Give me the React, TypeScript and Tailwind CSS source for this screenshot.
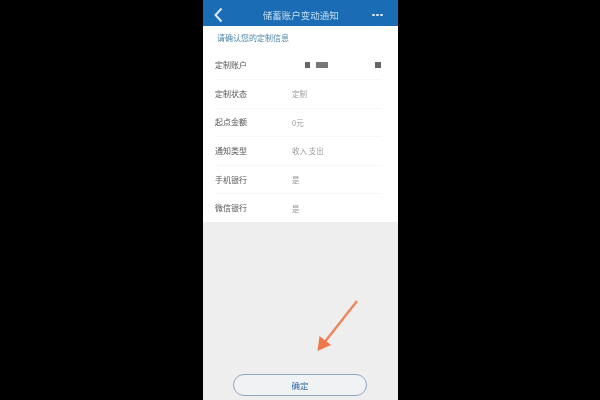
const font = { fontFamily: '"Noto Sans CJK SC", "Liberation Sans", sans-serif' };

const rows = [
  { label: "定制状态", value: "定制" },
  { label: "起点金额", value: "0元" },
  { label: "通知类型", value: "收入 支出" },
  { label: "手机银行", value: "是" },
  { label: "微信银行", value: "是" },
];

function Row({ label, value }: { label: string; value: string }) {
  return (
    <div className="flex h-[28.6px] items-center border-t border-[#f6f6f6]">
      <span className="w-[77px] text-[8px] text-[#555555]">{label}</span>
      <span className="text-[7.5px] text-[#999999]">{value}</span>
    </div>
  );
}

export default function App() {
  return (
    <div className="flex h-[400px] w-[600px] justify-center overflow-hidden bg-black" style={font}>
      <div className="relative ml-[1px] flex w-[195px] flex-col bg-[#eeeeee] blur-[0.6px]">
        {/* Header */}
        <div className="flex h-[26px] shrink-0 items-center justify-between bg-[#1a6db5] pl-[11px] pr-[15px] pt-[4px]">
          <svg width="9" height="16" viewBox="0 0 9 16" fill="none">
            <path d="M7.5 1.5 L1.5 8 L7.5 14.5" stroke="#dbe9f6" strokeWidth="2" />
          </svg>
          <span className="ml-[6px] text-[9.5px] text-[#c4dcf0]">储蓄账户变动通知</span>
          <span className="flex gap-[1.5px]">
            <i className="h-[2.5px] w-[2.5px] rounded-full bg-[#dbe9f6]" />
            <i className="h-[2.5px] w-[2.5px] rounded-full bg-[#dbe9f6]" />
            <i className="h-[2.5px] w-[2.5px] rounded-full bg-[#dbe9f6]" />
          </span>
        </div>

        {/* Subtitle */}
        <div className="flex h-[24px] shrink-0 items-center bg-white pl-[14px] text-[8px] text-[#4a86ab]">
          请确认您的定制信息
        </div>

        {/* Form rows */}
        <div className="flex h-[172px] shrink-0 flex-col bg-white pl-[12px] pr-[16px]">
          <div className="flex h-[29px] items-center">
            <span className="w-[90px] text-[8px] text-[#555555]">定制账户</span>
            <span className="flex items-center">
              <i className="h-[6px] w-[5px] bg-[#666666]" />
              <i className="ml-[6px] h-[6px] w-[12px] bg-[#777777]" />
              <i className="ml-[47px] h-[6px] w-[6px] bg-[#666666]" />
            </span>
          </div>
          {rows.map((r) => (
            <Row key={r.label} label={r.label} value={r.value} />
          ))}
        </div>

        {/* Confirm */}
        <div className="mt-auto mb-[4px] ml-[30px] flex h-[22px] w-[134px] items-center justify-center rounded-full border border-[#8da6c4] bg-[#f1f2f4] text-[8.5px] text-[#2a6aa8]">
          确定
        </div>

        {/* Annotation arrow */}
        <svg className="absolute left-[110px] top-[298px]" width="50" height="56" viewBox="0 0 50 56" fill="none">
          <path d="M44 3 L11 45" stroke="#f0855a" strokeWidth="2.4" />
          <path d="M4.5 53 L6.5 38 L18 47 Z" fill="#f0774a" />
        </svg>
      </div>
    </div>
  );
}
